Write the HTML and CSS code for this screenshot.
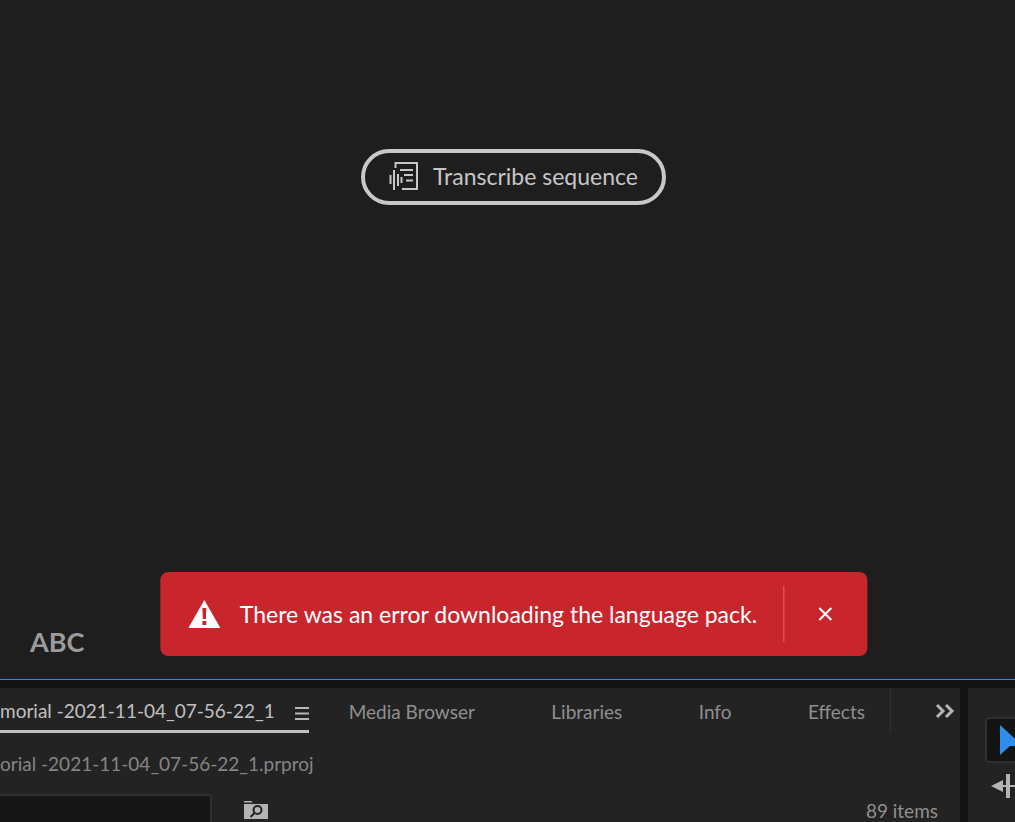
FILE: index.html
```html
<!DOCTYPE html>
<html lang="en">
<head>
<meta charset="utf-8">
<meta name="viewport" content="width=device-width, initial-scale=1">
<title>Text panel</title>
<link rel="stylesheet" href="styles.css">
</head>
<body>
<main class="text-panel">
  <button class="transcribe" type="button">
    <svg class="transcribe-icon" viewBox="0 0 30 30" aria-hidden="true"><path d="M6.500 7V2H28V28H13M11 9H24M15 14H24M17 19.500H24M1.500 14V23M5 9V29M9 13V25M12.500 16V22"/></svg>
    <span>Transcribe sequence</span>
  </button>
  <p class="caption-label">ABC</p>
  <div class="toast" role="alert">
    <svg class="warning-icon" viewBox="0 0 32 30" aria-hidden="true"><path class="warning-shape" d="M16 1L32 29H0Z"/><path class="warning-mark" d="M14 9H18L17.500 20H14.500ZM14 22H18V26H14Z"/></svg>
    <span class="toast-text">There was an error downloading the language pack.</span>
    <button class="toast-close" type="button" aria-label="Close"><svg viewBox="0 0 16 16" aria-hidden="true"><path d="M2 2L14 14M14 2L2 14"/></svg></button>
  </div>
</main>
<div class="dock">
  <section class="project-panel">
    <nav class="tabs">
      <button class="tab tab-active" type="button"><span>morial -2021-11-04_07-56-22_1</span><svg class="menu-icon" viewBox="0 0 14 13" aria-hidden="true"><path d="M0 1H14M0 6.500H14M0 12H14"/></svg></button>
      <div class="tab-list">
        <button class="tab" type="button">Media Browser</button>
        <button class="tab" type="button">Libraries</button>
        <button class="tab" type="button">Info</button>
        <button class="tab" type="button">Effects</button>
      </div>
      <button class="more" type="button" aria-label="More panels"><svg viewBox="0 0 20 16" aria-hidden="true"><path d="M2 2L8 8L2 14M11 2L17 8L11 14"/></svg></button>
    </nav>
    <p class="project-name">orial -2021-11-04_07-56-22_1.prproj</p>
    <div class="filter-row">
      <input class="search" type="text" aria-label="Search project">
      <button class="folder" type="button" aria-label="Find in folder"><svg viewBox="0 0 26 20" aria-hidden="true"><path class="folder-shape" d="M1 1H8L10 2.500H1ZM1 4H25V19H1Z"/><circle cx="14.500" cy="10" r="4"/><path class="folder-handle" d="M11.500 13L7.500 17"/></svg></button>
      <span class="count">89 items</span>
    </div>
  </section>
  <aside class="tools">
    <button class="tool tool-active" type="button" aria-label="Selection tool"><svg class="select-icon" viewBox="0 0 24 32" aria-hidden="true"><path d="M1 1L24 22H11L1 31Z"/></svg></button>
    <button class="tool" type="button" aria-label="Track tool"><svg class="track-icon" viewBox="0 0 36 26" aria-hidden="true"><path d="M0 13L12 7V19ZM10 12H26V14H10ZM15 1H19V25H15ZM36 13L24 7V19Z"/></svg></button>
  </aside>
</div>
</body>
</html>
```
FILE: styles.css
```css
* { box-sizing: border-box; }
body {
  margin: 0;
  height: 100vh;
  display: flex;
  flex-direction: column;
  overflow: hidden;
  background: #141414;
  color: #8f8f8f;
  font-family: Lato, "Open Sans", sans-serif;
  font-size: 19px;
  line-height: 24px;
}
p { margin: 0; }
button {
  margin: 0;
  padding: 0;
  border: 0;
  background: none;
  color: inherit;
  font: inherit;
}
svg { display: block; flex: none; fill: none; }
.text-panel {
  position: relative;
  flex: 1;
  display: flex;
  flex-direction: column;
  align-items: center;
  justify-content: space-between;
  padding: 149px 0 21px;
  background: #1e1e1e;
  border-bottom: 1px solid #3d84cc;
  box-shadow: inset 0 -1px #10263e;
}
.transcribe {
  display: flex;
  align-items: center;
  gap: 14px;
  height: 56px;
  margin-left: 12px;
  padding: 0 24px 2px;
  border: 4px solid #c8c8c8;
  border-radius: 28px;
  color: #c6c6c6;
  font-size: 23px;
}
.transcribe-icon { width: 30px; height: 30px; stroke: #c6c6c6; stroke-width: 2; }
.caption-label {
  align-self: flex-start;
  padding-left: 30px;
  color: #9b9b9b;
  font-size: 27px;
  font-weight: 700;
  line-height: 32px;
}
.toast {
  position: absolute;
  bottom: 23px;
  left: 50%;
  transform: translateX(-50%);
  display: flex;
  align-items: center;
  height: 84px;
  margin-left: 6px;
  padding: 14px 0 14px 28px;
  border-radius: 8px;
  background: #c9252d;
  color: #fff;
  font-size: 23px;
  white-space: nowrap;
}
.warning-icon { width: 32px; height: 30px; margin-right: 20px; }
.warning-shape { fill: #fff; }
.warning-mark { fill: #c9252d; }
.toast-text { padding-right: 26px; }
.toast-close {
  display: grid;
  place-items: center;
  align-self: stretch;
  width: 84px;
  border-left: 1px solid #e0666c;
}
.toast-close svg { width: 16px; height: 16px; stroke: #fff; stroke-width: 2; }
.dock { display: flex; gap: 8px; height: 142px; padding-top: 8px; }
.project-panel { flex: 1; min-width: 0; background: #232323; }
.tabs { display: flex; height: 45px; padding-right: 5px; }
.tab { height: 45px; padding-top: 2px; white-space: nowrap; }
.tab-active {
  display: flex;
  align-items: center;
  gap: 20px;
  padding-top: 4px;
  border-bottom: 3px solid #c0c0c0;
  color: #c0c0c0;
}
.menu-icon { width: 14px; height: 13px; margin-top: 4px; stroke: #b8b8b8; stroke-width: 2; }
.tab-list {
  flex: 1;
  display: flex;
  justify-content: space-between;
  padding: 0 25px 0 40px;
  border-right: 1px solid #303030;
}
.more { display: flex; align-items: center; justify-content: flex-end; width: 64px; }
.more svg { width: 20px; height: 16px; stroke: #b4b4b4; stroke-width: 3; }
.project-name { padding: 19px 0 18px; color: #858585; }
.filter-row { display: flex; align-items: flex-start; }
.search {
  width: 212px;
  height: 36px;
  border: 2px solid #303030;
  border-left: 0;
  border-radius: 0 4px 4px 0;
  background: #161616;
  color: #c0c0c0;
  font: inherit;
}
.folder { margin: 6px 0 0 31px; }
.folder svg { width: 26px; height: 20px; }
.folder-shape { fill: #b4b4b4; }
.folder circle, .folder-handle { stroke: #232323; stroke-width: 2; }
.count { margin: 5px 22px 0 auto; }
.tools { width: 47px; overflow: hidden; padding: 29px 0 0 17px; background: #232323; }
.tool { display: flex; align-items: center; width: 48px; height: 46px; padding-left: 6px; }
.tool-active { padding-left: 12px; border: 2px solid #303030; border-radius: 4px; background: #141414; }
.select-icon { width: 24px; height: 32px; fill: #2f8eed; }
.track-icon { width: 36px; height: 26px; fill: #b4b4b4; }
```
